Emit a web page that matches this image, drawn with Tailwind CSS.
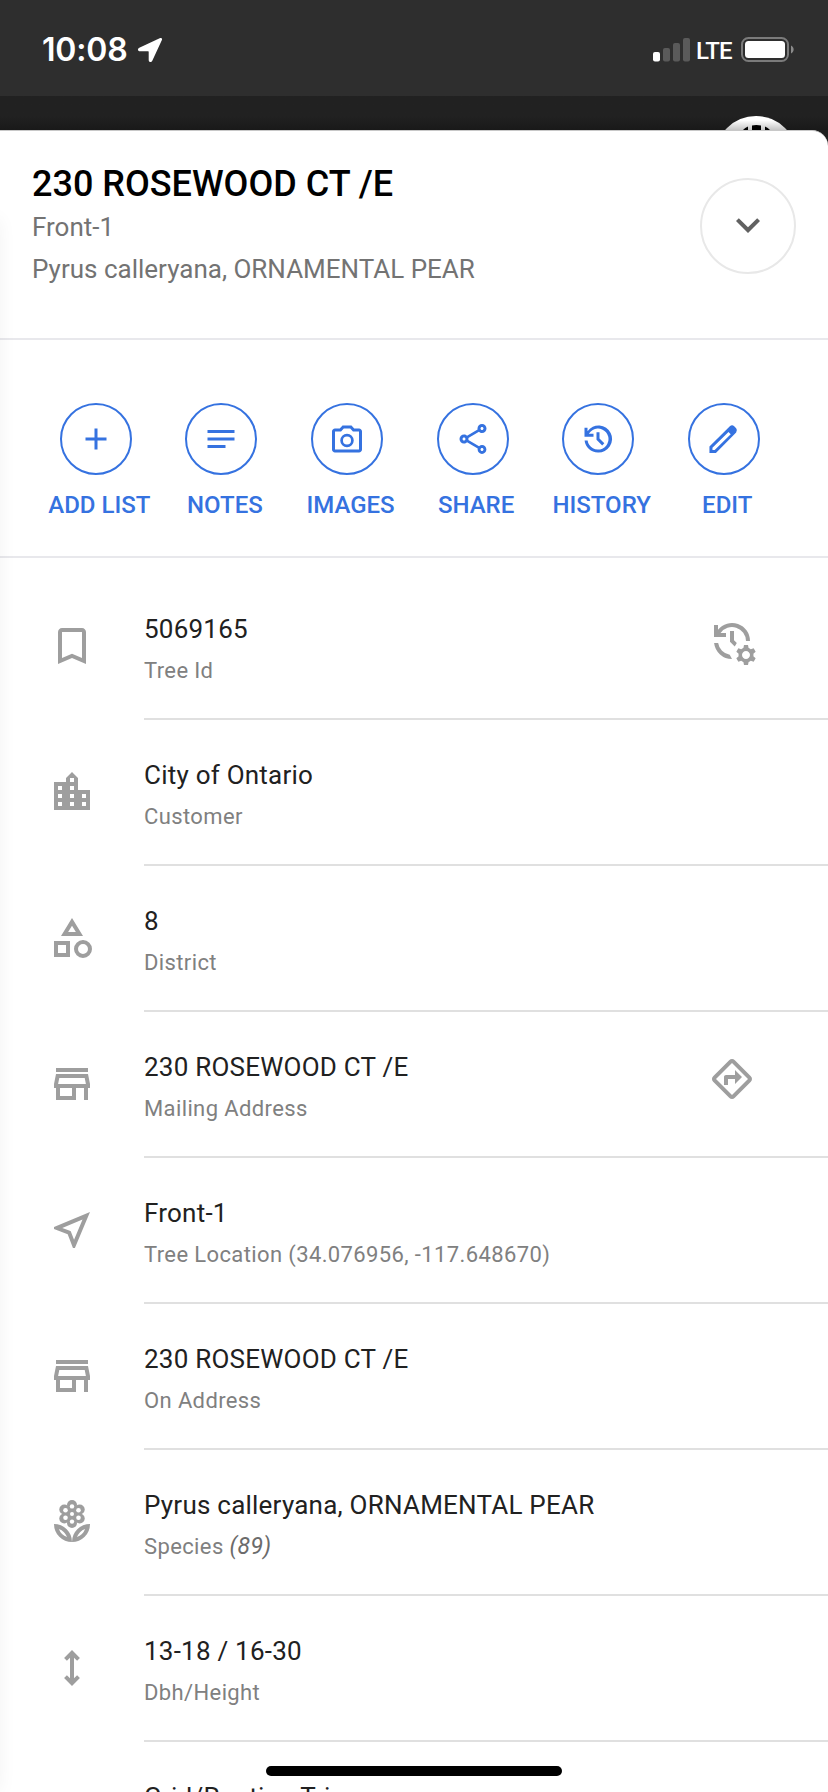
<!DOCTYPE html>
<html lang="en">
<head>
  <meta charset="UTF-8">
  <meta name="viewport" content="width=device-width, initial-scale=1.0">
  <title>230 ROSEWOOD CT /E</title>
  <script src="https://cdn.jsdelivr.net/npm/@tailwindcss/browser@4"></script>
</head>
<body class="h-[1792px] w-[828px] overflow-hidden bg-[#1f1f1f] font-[Roboto,sans-serif]">
  <div class="relative flex h-[1792px] w-[828px] flex-col overflow-hidden">

    <!-- Status bar -->
    <header class="flex h-24 shrink-0 items-center bg-[#2e2e2e] pl-[42px] pr-[33px] pt-1 text-white">
      <span class="w-[87px] font-[Inter,sans-serif] text-[32px] leading-none font-semibold tracking-[-0.2px]">10:08</span>
      <svg class="ml-2 size-[26px]" viewBox="0 0 26 26" fill="currentColor"><path d="M23.2 1.1 2.3 10.8C.2 11.8.7 14.3 3 14.3h8.300q.4 0 .4.4V23c0 2.400 2.600 2.900 3.600.8L24.900 2.900c.6-1.300-.4-2.400-1.700-1.800z"/></svg>
      <div class="ml-auto flex items-center">
        <svg class="h-6 w-[38px]" viewBox="0 0 38 24" fill="#5a5a5a">
          <rect x="0" y="14" width="7" height="9.500" rx="2" fill="#fff"/>
          <rect x="10" y="10" width="7" height="13.500" rx="2"/>
          <rect x="20" y="5" width="7" height="18.500" rx="2"/>
          <rect x="30" y="0" width="7" height="23.500" rx="2"/>
        </svg>
        <span class="mt-[2px] ml-[5px] w-[38px] text-[24px] leading-none font-medium tracking-[-0.8px]">LTE</span>
        <svg class="ml-[7px] h-[26px] w-[54px]" viewBox="0 0 54 26">
          <rect x="1" y="1" width="46" height="23" rx="6.500" fill="none" stroke="#7b7b7b" stroke-width="2"/>
          <rect x="4" y="4" width="40" height="17" rx="3.500" fill="#fff"/>
          <path d="M50 8.500c3.500 1.500 3.500 6.500 0 8z" fill="#8b8b8b"/>
        </svg>
      </div>
    </header>

    <!-- Map button peeking out behind the sheet -->
    <div class="flex h-[34px] shrink-0 justify-end bg-linear-to-b from-[#212121] from-60% to-[#191919] pr-[36px] pt-5">
      <svg class="h-[14px] w-[72px]" viewBox="0 0 72 14">
        <defs><linearGradient id="shade" x1="0" y1="0" x2="0" y2="14" gradientUnits="userSpaceOnUse"><stop offset=".3" stop-color="#fff"/><stop offset="1" stop-color="#c4c4c4"/></linearGradient></defs>
        <circle cx="36" cy="41" r="41" fill="url(#shade)"/>
        <path d="M32 9.500q4-.8 9 0V14h-9zM23 14q2-2.500 5-3.500V14zM45 14v-3.500q3 1 5 3.500z"/>
      </svg>
    </div>

    <!-- Sheet -->
    <main class="relative flex h-[1662px] shrink-0 flex-col rounded-tr-[16px] border-t border-[#c8c8c8] bg-white">
      <section class="flex h-[209px] shrink-0 justify-between border-b-2 border-[#e8e8ec] pl-8 pr-8">
        <div class="flex flex-col pt-8 text-[26px] text-[#737373]">
          <h1 class="mb-px text-[36px] leading-[42px] font-medium text-black">230 ROSEWOOD CT /E</h1>
          <p class="leading-[42px]">Front-1</p>
          <p class="leading-[42px]">Pyrus calleryana, ORNAMENTAL PEAR</p>
        </div>
        <button class="mt-[47px] flex size-24 items-center justify-center rounded-full border-2 border-[#e8e8e8] pb-[2px] text-[#616161]">
          <svg class="size-12" viewBox="0 0 24 24" fill="currentColor"><path d="M7.410 8.590 12 13.170l4.590-4.580L18 10l-6 6-6-6z"/></svg>
        </button>
      </section>

      <!-- Actions -->
      <nav class="grid h-[218px] shrink-0 grid-cols-[repeat(6,125.6px)] border-b-2 border-[#e8e8ec] pl-[33px] pt-[63px] text-[24px] font-medium text-[#3572e0]">
        <a class="flex flex-col items-center gap-3">
          <span class="flex size-[72px] items-center justify-center rounded-full border-2 border-current">
            <svg class="size-9" viewBox="0 0 24 24" fill="currentColor"><path d="M19 13h-6v6h-2v-6H5v-2h6V5h2v6h6z"/></svg>
          </span>
          <span class="pl-[7px] leading-[36px] whitespace-nowrap">ADD LIST</span>
        </a>
        <a class="flex flex-col items-center gap-3">
          <span class="flex size-[72px] items-center justify-center rounded-full border-2 border-current">
            <svg class="size-9" viewBox="0 0 24 24" fill="currentColor"><path d="M21 11.010 3 11v2h18zM3 16h12v2H3zM21 6H3v2.010L21 8z"/></svg>
          </span>
          <span class="pl-[7px] leading-[36px]">NOTES</span>
        </a>
        <a class="flex flex-col items-center gap-3">
          <span class="flex size-[72px] items-center justify-center rounded-full border-2 border-current">
            <svg class="size-9" viewBox="0 0 24 24" fill="currentColor"><path d="M20 5h-3.170L15 3H9L7.170 5H4c-1.100 0-2 .9-2 2v12c0 1.100.9 2 2 2h16c1.100 0 2-.9 2-2V7c0-1.100-.9-2-2-2zm0 14H4V7h4.050l1.830-2h4.240l1.830 2H20zM12 8.500a4.500 4.500 0 1 0 0 9 4.500 4.500 0 0 0 0-9zm0 7.200a2.700 2.700 0 1 1 0-5.400 2.700 2.700 0 0 1 0 5.400z"/></svg>
          </span>
          <span class="pl-[7px] leading-[36px]">IMAGES</span>
        </a>
        <a class="flex flex-col items-center gap-3">
          <span class="flex size-[72px] items-center justify-center rounded-full border-2 border-current">
            <svg class="size-9" viewBox="0 0 24 24" fill="currentColor"><path d="M18 16.080c-.76 0-1.440.3-1.960.77L8.910 12.700c.05-.23.09-.46.09-.7s-.04-.47-.09-.7l7.050-4.110c.54.5 1.250.81 2.040.81 1.660 0 3-1.340 3-3s-1.340-3-3-3-3 1.340-3 3c0 .24.04.47.09.7L8.040 9.810C7.500 9.310 6.790 9 6 9c-1.660 0-3 1.340-3 3s1.340 3 3 3c.79 0 1.500-.31 2.040-.81l7.120 4.160c-.05.21-.08.43-.08.65 0 1.610 1.310 2.920 2.920 2.920s2.920-1.310 2.920-2.920-1.310-2.920-2.920-2.920zM18 4c.55 0 1 .45 1 1s-.45 1-1 1-1-.45-1-1 .45-1 1-1zM6 13c-.55 0-1-.45-1-1s.45-1 1-1 1 .45 1 1-.45 1-1 1zm12 7.020c-.55 0-1-.45-1-1s.45-1 1-1 1 .45 1 1-.45 1-1 1z"/></svg>
          </span>
          <span class="pl-[7px] leading-[36px]">SHARE</span>
        </a>
        <a class="flex flex-col items-center gap-3">
          <span class="flex size-[72px] items-center justify-center rounded-full border-2 border-current">
            <svg class="size-9" viewBox="0 0 24 24" fill="currentColor"><path d="M12 21c-4.630 0-8.450-3.500-8.950-8H5.070a7 7 0 1 0 1.080-4.800L5.950 8.500H9v2H3V4.500h2v2.350A9 9 0 1 1 12 21zM11 7.500h2v4.200l3.200 3.200-1.400 1.400L11 12.500z"/></svg>
          </span>
          <span class="pl-[7px] leading-[36px]">HISTORY</span>
        </a>
        <a class="flex flex-col items-center gap-3">
          <span class="flex size-[72px] items-center justify-center rounded-full border-2 border-current">
            <svg class="size-9" viewBox="0 0 24 24" fill="currentColor"><path fill-rule="evenodd" d="M2.300 21.300V17L15.900 3.500q1.500-1.200 2.900 0l1.300 1.300q1.200 1.500 0 2.900L6.600 21.300zM4.300 19.400h1.500l10.700-10.600-1.500-1.500L4.300 17.900z"/></svg>
          </span>
          <span class="pl-[7px] leading-[36px]">EDIT</span>
        </a>
      </nav>

      <!-- Details -->
      <ul class="flex flex-col pt-4 text-[26px] tracking-[0.23px] text-[#212121]">
        <li class="flex h-[146px] shrink-0 pl-12">
          <svg class="mt-12 mr-12 size-12 text-[#9e9e9e]" viewBox="0 0 24 24" fill="currentColor"><path d="M17 3H7c-1.100 0-1.990.9-1.990 2L5 21l7-3 7 3V5c0-1.100-.9-2-2-2zm0 15-5-2.180L7 18V5h10z"/></svg>
          <div class="flex grow justify-between border-b-2 border-[#e0e0e0] pt-[34px] pr-[72px]">
            <div>
              <p class="leading-[42px]">5069165</p>
              <p class="text-[22px] leading-[42px] tracking-[0.38px] text-[#808080]">Tree Id</p>
            </div>
            <svg class="mt-[9px] size-12 text-[#9e9e9e]" viewBox="0 0 24 24" fill="currentColor"><path d="m22.690 18.370 1.140-1-1-1.730-1.450.49a3.600 3.600 0 0 0-1.080-.63L20 14h-2l-.3 1.490c-.4.15-.76.36-1.080.63l-1.450-.49-1 1.730 1.140 1c-.08.5-.08.760 0 1.260l-1.140 1 1 1.730 1.450-.49c.32.270.680.480 1.080.630L18 24h2l.3-1.490c.4-.15.76-.36 1.080-.63l1.450.49 1-1.730-1.140-1c.08-.51.080-.770 0-1.270zM19 21c-1.100 0-2-.9-2-2s.9-2 2-2 2 .9 2 2-.9 2-2 2zM11 7v5.410l2.360 2.360 1.040-1.790-1.400-1.390V7zm10 5a9 9 0 0 0-16-5.660V4H3v6h6V8H6.260A7.010 7.010 0 0 1 19 12zm-10.140 6.910A7.010 7.010 0 0 1 5.070 13H3.050a9 9 0 0 0 8.950 8z"/></svg>
          </div>
        </li>
        <li class="flex h-[146px] shrink-0 pl-12">
          <svg class="mt-12 mr-12 size-12 text-[#9e9e9e]" viewBox="0 0 24 24" fill="currentColor"><path d="M15 11V5l-3-3-3 3v2H3v14h18V11zm-8 8H5v-2h2zm0-4H5v-2h2zm0-4H5V9h2zm6 8h-2v-2h2zm0-4h-2v-2h2zm0-4h-2V9h2zm0-4h-2V5h2zm6 12h-2v-2h2zm0-4h-2v-2h2z"/></svg>
          <div class="grow border-b-2 border-[#e0e0e0] pt-[34px]">
            <p class="leading-[42px]">City of Ontario</p>
            <p class="text-[22px] leading-[42px] tracking-[0.38px] text-[#808080]">Customer</p>
          </div>
        </li>
        <li class="flex h-[146px] shrink-0 pl-12">
          <svg class="mt-12 mr-12 size-12 text-[#9e9e9e]" viewBox="0 0 24 24" fill="currentColor"><path d="m12 2-5.500 9h11zm0 3.840L13.930 9h-3.870zM17.500 13a4.500 4.500 0 1 0 0 9 4.500 4.500 0 0 0 0-9zm0 7a2.500 2.500 0 1 1 0-5 2.500 2.500 0 0 1 0 5zM3 21.500h8v-8H3zm2-6h4v4H5z"/></svg>
          <div class="grow border-b-2 border-[#e0e0e0] pt-[34px]">
            <p class="leading-[42px]">8</p>
            <p class="text-[22px] leading-[42px] tracking-[0.38px] text-[#808080]">District</p>
          </div>
        </li>
        <li class="flex h-[146px] shrink-0 pl-12">
          <svg class="mt-12 mr-12 size-12 text-[#9e9e9e]" viewBox="0 0 24 24" fill="currentColor"><path d="M18.360 9l.6 3H5.040l.6-3zM20 4H4v2h16zm0 3H4l-1 5v2h1v6h10v-6h4v6h2v-6h1v-2zM6 18v-4h6v4z"/></svg>
          <div class="flex grow justify-between border-b-2 border-[#e0e0e0] pt-[34px] pr-[72px]">
            <div>
              <p class="leading-[42px]">230 ROSEWOOD CT /E</p>
              <p class="text-[22px] leading-[42px] tracking-[0.38px] text-[#808080]">Mailing Address</p>
            </div>
            <svg class="mt-[9px] size-12 text-[#9e9e9e]" viewBox="0 0 24 24" fill="currentColor"><path d="m21.410 10.590-7.990-8c-.78-.78-2.050-.78-2.830 0l-8.010 8c-.78.78-.78 2.050 0 2.830l8.010 8c.78.78 2.050.78 2.830 0l7.990-8c.79-.79.79-2.050 0-2.830zM12 20l-8-8 8-8 8 8zM8 15v-4c0-.55.45-1 1-1h4.500V7.500L17 11l-3.500 3.500V12H10v3z"/></svg>
          </div>
        </li>
        <li class="flex h-[146px] shrink-0 pl-12">
          <svg class="mt-12 mr-12 size-12 text-[#9e9e9e]" viewBox="0 0 24 24" fill="currentColor"><path d="m17.270 6.730-4.240 10.130-1.320-3.420-.32-.83-.82-.32-3.430-1.330zM21 3 3 10.530v.98l6.840 2.650L12.480 21h.98z"/></svg>
          <div class="grow border-b-2 border-[#e0e0e0] pt-[34px]">
            <p class="leading-[42px]">Front-1</p>
            <p class="text-[22px] leading-[42px] tracking-[0.38px] text-[#808080]">Tree Location (34.076956, -117.648670)</p>
          </div>
        </li>
        <li class="flex h-[146px] shrink-0 pl-12">
          <svg class="mt-12 mr-12 size-12 text-[#9e9e9e]" viewBox="0 0 24 24" fill="currentColor"><path d="M18.360 9l.6 3H5.040l.6-3zM20 4H4v2h16zm0 3H4l-1 5v2h1v6h10v-6h4v6h2v-6h1v-2zM6 18v-4h6v4z"/></svg>
          <div class="grow border-b-2 border-[#e0e0e0] pt-[34px]">
            <p class="leading-[42px]">230 ROSEWOOD CT /E</p>
            <p class="text-[22px] leading-[42px] tracking-[0.38px] text-[#808080]">On Address</p>
          </div>
        </li>
        <li class="flex h-[146px] shrink-0 pl-12">
          <svg class="mt-12 mr-12 size-12 text-[#9e9e9e]" viewBox="0 0 24 24" fill="currentColor">
            <path fill-rule="evenodd" d="M12 22a9 9 0 0 0 9-9 9 9 0 0 0-9 9zm2.440-2.440a7.040 7.040 0 0 1 4.110-4.110 7.040 7.040 0 0 1-4.110 4.110zM3 13a9 9 0 0 0 9 9 9 9 0 0 0-9-9zm2.440 2.440a7.040 7.040 0 0 1 4.110 4.110 7.040 7.040 0 0 1-4.110-4.110z"/>
            <circle cx="12" cy="8" r="4"/><circle cx="12" cy="3.500" r="2.500"/><circle cx="12" cy="12.500" r="2.500"/><circle cx="8.150" cy="5.750" r="2.500"/><circle cx="15.850" cy="5.750" r="2.500"/><circle cx="8.150" cy="10.250" r="2.500"/><circle cx="15.850" cy="10.250" r="2.500"/>
            <g fill="#fff"><circle cx="12" cy="8" r="1"/><circle cx="12" cy="4.200" r="1.100"/><circle cx="12" cy="11.800" r="1.100"/><circle cx="8.750" cy="6.150" r="1.150"/><circle cx="15.250" cy="6.150" r="1.150"/><circle cx="8.750" cy="9.850" r="1.150"/><circle cx="15.250" cy="9.850" r="1.150"/></g>
          </svg>
          <div class="grow border-b-2 border-[#e0e0e0] pt-[34px]">
            <p class="leading-[42px]">Pyrus calleryana, ORNAMENTAL PEAR</p>
            <p class="text-[22px] leading-[42px] tracking-[0.38px] text-[#808080]">Species <i class="text-[23px] text-[#6b6b6b]">(89)</i></p>
          </div>
        </li>
        <li class="flex h-[146px] shrink-0 pl-12">
          <svg class="mt-12 mr-12 size-12 text-[#9e9e9e]" viewBox="0 0 24 24" fill="currentColor"><path d="M12 3 8.050 7l1.400 1.400L11 6.830v10.340L9.450 15.600 8.050 17 12 21l3.950-4-1.400-1.400L13 17.170V6.830l1.550 1.570L15.950 7z"/></svg>
          <div class="grow border-b-2 border-[#e0e0e0] pt-[34px]">
            <p class="leading-[42px]">13-18 / 16-30</p>
            <p class="text-[22px] leading-[42px] tracking-[0.38px] text-[#808080]">Dbh/Height</p>
          </div>
        </li>
        <li class="flex h-[146px] shrink-0 pt-[34px] pl-36">
          <p class="leading-[42px]">Grid/Routing Trim</p>
        </li>
      </ul>

      <!-- Soft shadow on the left edge -->
      <div class="absolute top-[88px] bottom-0 -left-5 w-5 shadow-[0_0_18px_rgba(0,0,0,0.05)]"></div>
    </main>

    <!-- Home indicator -->
    <div class="absolute bottom-4 left-[266px] h-[10px] w-[296px] rounded-full bg-black"></div>
  </div>
</body>
</html>
